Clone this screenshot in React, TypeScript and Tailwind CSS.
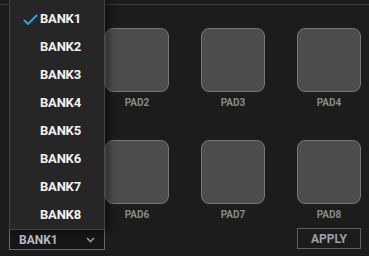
import React from "react";

const pads = ["PAD1", "PAD2", "PAD3", "PAD4", "PAD5", "PAD6", "PAD7", "PAD8"];
const banks = ["BANK1", "BANK2", "BANK3", "BANK4", "BANK5", "BANK6", "BANK7", "BANK8"];

const App = () => {
  return (
    <div
      className="relative w-[369px] h-[256px] overflow-hidden bg-[#1c1c1c]"
      style={{ fontFamily: '"Liberation Sans Narrow", Roboto, "Liberation Sans", sans-serif' }}
    >
      <div className="h-[5px] border-b border-[#3a3a3a]" />
      <div className="grid grid-cols-[64px_64px_64px_64px] gap-x-[32px] gap-y-[31px] pl-[9px] pt-[23px]">
        {pads.map((p) => (
          <div key={p} className="flex flex-col items-center">
            <div className="w-[64px] h-[64px] rounded-[8px] border border-[#777] bg-[#4c4c4c]" />
            <span className="mt-[5px] text-[10px] leading-[12px] font-bold text-[#8a8a8a]">{p}</span>
          </div>
        ))}
      </div>
      <div className="flex justify-between items-start pl-[9px] pr-[8px] mt-[7px]">
        <div className="mt-[2px] w-[96px] h-[20px] flex items-center justify-between pl-[9px] pr-[9px] border border-[#666] border-t-0 bg-[#161616]">
          <span className="text-[12px] font-bold text-[#b4bcc6]">BANK1</span>
          <svg width="9" height="6" viewBox="0 0 9 6" fill="none">
            <path d="M1 1l3.5 3.5L8 1" stroke="#999" strokeWidth="1.6" />
          </svg>
        </div>
        <div className="w-[64px] h-[21px] flex items-center justify-center border border-[#5e5e5e]">
          <span className="text-[12px] font-bold text-[#9aa0a8]">APPLY</span>
        </div>
      </div>
      <div className="absolute left-[9px] top-[-2px] w-[96px] h-[232px] bg-[#262626] border border-[#454545] shadow-[4px_0_8px_rgba(0,0,0,0.45)] pt-[6px]">
        {banks.map((b, i) => (
          <div key={b} className="h-[28px] flex items-center">
            <div className="w-[30px] flex justify-end pr-[2px]">
              {i === 0 && (
                <svg width="15" height="11" viewBox="0 0 15 11" fill="none">
                  <path d="M1 6l4 4L14 1" stroke="#2aa7dc" strokeWidth="1.8" />
                </svg>
              )}
            </div>
            <span className="text-[13px] font-bold text-[#f2f2f2] tracking-[-0.2px]">{b}</span>
          </div>
        ))}
      </div>
    </div>
  );
};

export default App;
